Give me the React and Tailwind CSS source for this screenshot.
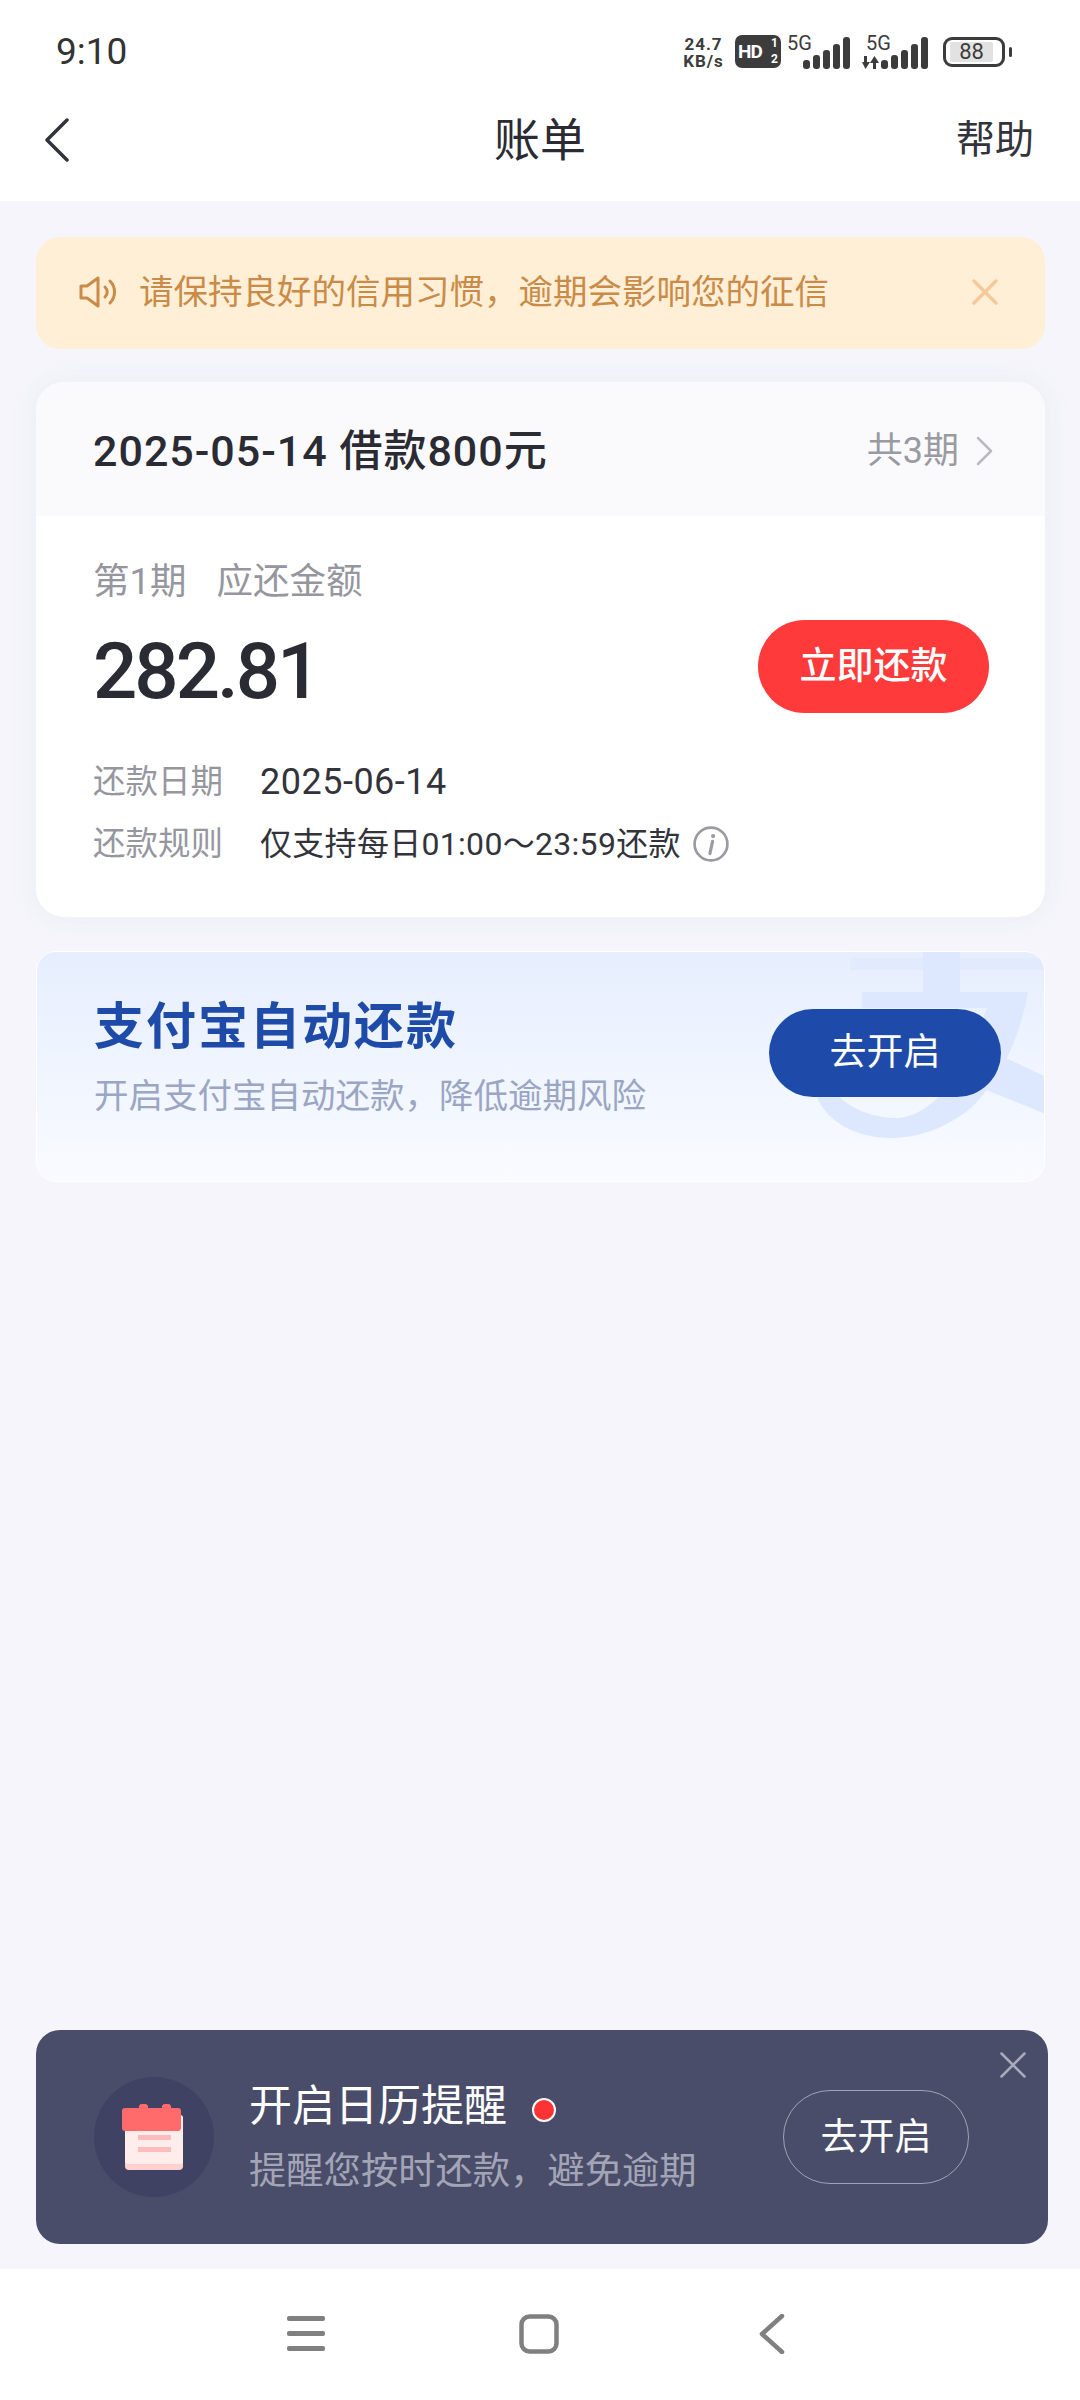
import React from 'react';

const FONT = 'font-["Roboto","Noto_Sans_CJK_SC",sans-serif]';

function SignalBars({ className }) {
  return (
    <svg className={className} width="48" height="32" viewBox="0 0 48 32" fill="#3c3c3c">
      <rect x="0" y="23" width="7" height="9" rx="3" />
      <rect x="10" y="18" width="7" height="14" rx="3" />
      <rect x="20" y="13" width="7" height="19" rx="3" />
      <rect x="30" y="7" width="7" height="25" rx="3" />
      <rect x="40" y="0" width="7" height="32" rx="3" />
    </svg>
  );
}

function StatusBar() {
  return (
    <div className="h-[104px] flex items-start justify-between pl-[56px] pr-[75px] pt-[34px]">
      <span className="text-[37px] leading-[36px] text-[#333] font-normal">9:10</span>
      <div className="flex items-start">
        <div className="w-[47px] mt-[2px] flex flex-col gap-[1px] text-[#3c3c3c] font-bold text-[17px] leading-[16px] tracking-[1px] text-center whitespace-nowrap">
          <div>24.7</div>
          <div>KB/s</div>
        </div>
        <div className="relative ml-[8px] mt-[1px] w-[46px] h-[33px] bg-[#3c3c3c] rounded-[7px] text-white font-bold">
          <span className="absolute left-[3px] top-[7px] text-[19px] leading-[19px] tracking-[-1px]">HD</span>
          <span className="absolute right-[3px] top-[2px] text-[12px] leading-[13px]">1</span>
          <span className="absolute right-[3px] bottom-[2px] text-[12px] leading-[13px]">2</span>
        </div>
        <div className="relative w-[63px] h-[36px] ml-[6px]">
          <span className="absolute left-0 top-0 text-[20px] leading-[19px] text-[#3c3c3c]">5G</span>
          <SignalBars className="absolute left-[16px] top-[3px]" />
        </div>
        <div className="relative w-[67px] h-[36px] ml-[12px]">
          <span className="absolute left-[4px] top-0 text-[20px] leading-[19px] text-[#3c3c3c]">5G</span>
          <svg className="absolute left-0 top-[22px]" width="17" height="13" viewBox="0 0 17 13" fill="#3c3c3c">
            <path d="M2 0h3v6h3l-4.500 7L0 6h2zM11 13h3V7h3l-4.500-7L8 7h3z" />
          </svg>
          <SignalBars className="absolute left-[19px] top-[3px]" />
        </div>
        <div className="relative ml-[14px] mt-[3px] w-[62px] h-[30px] rounded-[9px] border-[3px] border-[#3c3c3c] flex items-center">
          <div className="ml-[4px] w-[43px] h-[20px] rounded-[2px] bg-[#e2e2e2] flex items-center justify-center text-[22px] leading-[22px] text-[#3c3c3c]">88</div>
          <div className="absolute right-[-10px] top-[7px] w-[3px] h-[10px] rounded-[2px] bg-[#3c3c3c]"></div>
        </div>
      </div>
    </div>
  );
}

function TopBar() {
  return (
    <div className="h-[97px] flex items-start justify-between relative pl-[44px] pr-[46px]">
      <svg className="mt-[14px]" width="26" height="44" viewBox="0 0 26 44" fill="none" stroke="#33343b" strokeWidth="3.500" strokeLinecap="round" strokeLinejoin="round">
        <path d="M23 2 3 22l20 20" />
      </svg>
      <span className="absolute left-0 right-0 top-[9px] text-center text-[46px] leading-[54px] text-[#2a2b33]">账单</span>
      <span className="mt-[12px] text-[39px] leading-[48px] text-[#33343b]">帮助</span>
    </div>
  );
}

function Notice() {
  return (
    <div className="h-[112px] bg-[#FFEFD6] rounded-[24px] flex items-center justify-between pl-[43px] pr-[47px] pb-[2px]">
      <div className="flex items-center">
        <svg width="40" height="32" viewBox="0 0 40 32" fill="none" stroke="#C98B47" strokeWidth="3" strokeLinecap="round" strokeLinejoin="round">
          <path d="M2 10h6L19 2v28L8 22H2z" />
          <path d="M26 11c3 3 3 7 0 10" />
          <path d="M31 5c6 6 6 16 0 22" />
        </svg>
        <span className="ml-[20px] text-[34.500px] leading-[40px] text-[#C98B47] whitespace-nowrap">请保持良好的信用习惯，逾期会影响您的征信</span>
      </div>
      <svg width="26" height="26" viewBox="0 0 26 26" fill="none" stroke="#F5C999" strokeWidth="3.500" strokeLinecap="round">
        <path d="M2 2l22 22M24 2 2 24" />
      </svg>
    </div>
  );
}

function BillCard() {
  return (
    <div className="mt-[33px] h-[535px] bg-white rounded-[28px] overflow-hidden shadow-[0_0_24px_rgba(225,228,240,0.45)]">
      <div className="h-[134px] pt-[4px] bg-[#FAFAFD] flex items-center justify-between pl-[57px] pr-[52px]">
        <span className="text-[43px] leading-[50px] font-medium text-[#2a2b33] tracking-[1px] whitespace-nowrap">2025-05-14 借款800元</span>
        <div className="flex items-center">
          <span className="text-[36px] leading-[44px] text-[#9a9aa2]">共3期</span>
          <svg className="ml-[17px]" width="17" height="30" viewBox="0 0 17 30" fill="none" stroke="#b9b9c0" strokeWidth="2.500" strokeLinecap="round" strokeLinejoin="round">
            <path d="M2 2l13 13L2 28" />
          </svg>
        </div>
      </div>
      <div className="pl-[57px] pr-[56px] pt-[46px]">
        <div className="flex text-[36.500px] leading-[40px] text-[#96969e]">
          <span>第1期</span>
          <span className="ml-[30px]">应还金额</span>
        </div>
        <div className="mt-[18px] flex items-start justify-between">
          <span className="mt-[9px] text-[78px] leading-[86px] font-medium text-[#2a2b33] tracking-[-3px]">282.81</span>
          <button className="w-[231px] h-[93px] rounded-full bg-[#FF3A3A] text-white text-[37px] font-medium">立即还款</button>
        </div>
        <div className="mt-[47px] flex items-center h-[40px]">
          <span className="w-[167px] text-[32.500px] text-[#96969e]">还款日期</span>
          <span className="text-[36px] text-[#33343b] tracking-[0.500px]">2025-06-14</span>
        </div>
        <div className="mt-[22px] flex items-center h-[40px]">
          <span className="w-[167px] text-[32.500px] text-[#96969e]">还款规则</span>
          <span className="text-[32px] text-[#33343b] tracking-[0.300px] whitespace-nowrap">仅支持每日01:00～23:59还款</span>
          <svg className="ml-[12px]" width="36" height="36" viewBox="0 0 34 34" fill="none">
            <circle cx="17" cy="17" r="15.500" stroke="#9a9aa2" strokeWidth="2.500" />
            <path d="M18.500 14.500 16 26" stroke="#9a9aa2" strokeWidth="3" strokeLinecap="round" />
            <circle cx="19" cy="9.500" r="2" fill="#9a9aa2" />
          </svg>
        </div>
      </div>
    </div>
  );
}

function AlipayBanner() {
  return (
    <div className="relative mt-[34px] h-[231px] rounded-[20px] overflow-hidden border border-white bg-gradient-to-b from-[#E6EEFE] to-[#F9FBFF] flex items-start justify-between">
      {/* watermark glyph */}
      <svg className="absolute left-[775px] top-0" width="234" height="200" viewBox="0 0 234 200" fill="none">
        <path d="M38 6h196v12H38z" fill="#E2EAFD" />
        <path d="M111 0h37v42h-37z" fill="#DDE7FD" />
        <path d="M50 40H216C208 85 190 125 160 155 132 178 104 186 78 186 45 186 15 170 5 145L15 130C30 155 60 167 88 166 130 160 155 110 175 56H50Z" fill="#DDE7FD" />
        <path d="M150 85 234 125V162L130 120Z" fill="#DDE7FD" />
      </svg>
      <div className="relative pl-[57px] pt-[49px]">
        <div className="text-[50px] leading-[52px] font-bold text-[#1F4BA8] tracking-[2px] whitespace-nowrap">支付宝自动还款</div>
        <div className="mt-[23px] text-[34.500px] leading-[40px] text-[#9AA6C4] whitespace-nowrap">开启支付宝自动还款，降低逾期风险</div>
      </div>
      <button className="relative mt-[57px] mr-[43px] w-[232px] h-[88px] rounded-full bg-[#1E4AA9] text-white text-[37px]">去开启</button>
    </div>
  );
}

function CalendarIcon() {
  return (
    <svg width="66" height="68" viewBox="0 0 66 68" fill="none">
      <rect x="4" y="12" width="58" height="55" rx="4" fill="#FFD2D0" />
      <rect x="4" y="12" width="58" height="49" rx="3" fill="#FFEDEC" />
      <path d="M1 8a3 3 0 0 1 3-3h14a3 3 0 0 1 3-4h3a3 3 0 0 1 3 4h14a3 3 0 0 1 3-4h3a3 3 0 0 1 3 4h7a3 3 0 0 1 3 3v17a3 3 0 0 1-3 3H4a3 3 0 0 1-3-3z" fill="#FF6B6B" />
      <rect x="17" y="32" width="33" height="5" fill="#FFBCBC" />
      <rect x="17" y="44" width="33" height="5" fill="#FFBCBC" />
    </svg>
  );
}

function CalendarCard() {
  return (
    <div className="relative h-[214px] w-[1012px] rounded-[24px] bg-[#4A4D69] flex items-center pl-[58px] pr-[79px]">
      <div className="w-[120px] h-[120px] rounded-full bg-[#3F4262] flex items-center justify-center">
        <CalendarIcon />
      </div>
      <div className="ml-[35px]">
        <div className="flex items-center h-[50px]">
          <span className="text-[43px] leading-[50px] text-white whitespace-nowrap">开启日历提醒</span>
          <span className="ml-[25px] mt-[8px] w-[24px] h-[24px] rounded-full bg-[#FF3333] border-2 border-white"></span>
        </div>
        <div className="mt-[18px] text-[37.300px] leading-[44px] text-[#A3A5B7] whitespace-nowrap">提醒您按时还款，避免逾期</div>
      </div>
      <button className="ml-auto w-[186px] h-[94px] pt-[2px] rounded-full border border-[#A0A2B5] text-white text-[37px]">去开启</button>
      <svg className="absolute right-[22px] top-[22px]" width="26" height="26" viewBox="0 0 26 26" fill="none" stroke="#A9ABBC" strokeWidth="2.500" strokeLinecap="round">
        <path d="M1.500 1.500l23 23M24.500 1.500l-23 23" />
      </svg>
    </div>
  );
}

function NavBar() {
  return (
    <div className="h-[131px] bg-white flex items-start pt-[45px] pl-[287px]">
      <svg width="38" height="38" viewBox="0 0 38 38" fill="#808080">
        <rect x="0" y="2" width="38" height="5" rx="2" />
        <rect x="0" y="17" width="38" height="5" rx="2" />
        <rect x="0" y="32" width="38" height="5" rx="2" />
      </svg>
      <svg className="ml-[194px]" width="40" height="40" viewBox="0 0 40 40" fill="none" stroke="#808080" strokeWidth="4.500">
        <rect x="2.500" y="2.500" width="35" height="35" rx="8" />
      </svg>
      <svg className="ml-[200px]" width="26" height="40" viewBox="0 0 26 40" fill="none" stroke="#808080" strokeWidth="4.500" strokeLinecap="round" strokeLinejoin="round">
        <path d="M23 2 3 20l20 18" />
      </svg>
    </div>
  );
}

export default function App() {
  return (
    <div className={`${FONT} w-[1080px] h-[2400px] flex flex-col bg-[#F5F5FB]`}>
      <div className="bg-white h-[201px]">
        <StatusBar />
        <TopBar />
      </div>
      <div className="flex-1 flex flex-col justify-between pl-[36px] pr-[35px] pt-[36px] pb-[25px]">
        <div>
          <Notice />
          <BillCard />
          <AlipayBanner />
        </div>
        <CalendarCard />
      </div>
      <NavBar />
    </div>
  );
}
